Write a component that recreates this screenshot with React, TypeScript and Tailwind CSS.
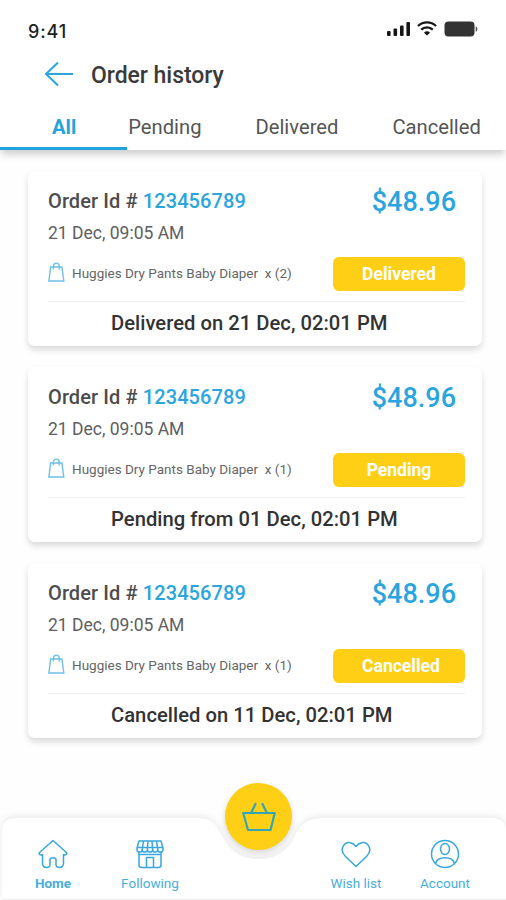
import type { ReactNode } from 'react';

type Order = {
  status: string;
  quantity: number;
  summary: string;
};

const orders: Order[] = [
  { status: 'Delivered', quantity: 2, summary: 'Delivered on 21 Dec, 02:01 PM' },
  { status: 'Pending', quantity: 1, summary: 'Pending from 01 Dec, 02:01 PM' },
  { status: 'Cancelled', quantity: 1, summary: 'Cancelled on 11 Dec, 02:01 PM' },
];

const StatusBar = () => (
  <div className="flex h-[52px] items-start justify-between pl-7 pr-[28px] pt-[21px]">
    <span className="font-['Inter'] text-[18px] font-medium leading-[22px] tracking-[0.9px] text-[#222]">9:41</span>
    <svg width="92" height="16" viewBox="0 0 92 16" fill="none">
      <g fill="#161616">
        <rect x="1" y="10" width="3.6" height="5" rx="1" />
        <rect x="7.5" y="7.5" width="3.6" height="7.5" rx="1" />
        <rect x="14" y="4.5" width="3.6" height="10.5" rx="1" />
        <rect x="20.4" y="1" width="3.6" height="14" rx="1" />
        <path d="M41 14.5l-3-2.8a4.5 4.5 0 0 1 6 0z" />
      </g>
      <path d="M32 5a13 13 0 0 1 18 0M35.2 8.7a8.6 8.6 0 0 1 11.6 0" stroke="#161616" strokeWidth="2.3" />
      <rect x="58.5" y="0.5" width="30" height="15" rx="4" fill="#333" />
      <path d="M89.7 5.2c2.2.8 2.2 4.8 0 5.6z" fill="#555" />
    </svg>
  </div>
);

const Header = () => (
  <header className="h-[150px] bg-white shadow-[0_5px_8px_-1px_rgba(0,0,0,0.2)]">
    <StatusBar />
    <div className="flex h-11 items-center gap-[17px] pl-[44px]">
      <svg width="30" height="26" viewBox="0 0 30 26" fill="none" stroke="#2ba5df" strokeWidth="2">
        <path d="M29 13H2M14 1.5L2 13l12 11.5" />
      </svg>
      <h1 className="pt-[5px] text-[23px] font-medium tracking-[-0.05px] text-[#3a3a3a]">Order history</h1>
    </div>
    <nav className="flex h-[51px] gap-[54px] pl-[52px] pt-[16px] text-[20.2px] leading-[30px] text-[#555]">
      <span className="-mr-[2px] font-bold text-[#25a3dd]">All</span>
      <span>Pending</span>
      <span>Delivered</span>
      <span>Cancelled</span>
    </nav>
    <div className="h-[3px] w-[127px] bg-[#20a3dd]" />
  </header>
);

const OrderCard = ({ status, quantity, summary }: Order) => (
  <article className="h-[175px] rounded-[7px] bg-white pl-5 pr-[17px] pt-[15px] shadow-[0_4px_6px_0_rgba(0,0,0,0.14)]">
    <div className="flex h-8 items-center justify-between pr-[9px]">
      <p className="-mt-[2px] text-[20px] font-medium leading-8 tracking-[0.1px] text-[#4c4c4c]">
        Order Id # <span className="text-[#2ba5df]">123456789</span>
      </p>
      <p className="text-[27px] font-medium leading-8 text-[#2ba5df]">$48.96</p>
    </div>
    <p className="h-[39px] pt-[3px] text-[17.5px] leading-6 text-[#606060]">21 Dec, 09:05 AM</p>
    <div className="flex h-[34px] items-center">
      <svg className="mb-[4px] mr-[7px]" width="17" height="20" viewBox="0 0 17 20" fill="none" stroke="#6dbfe9" strokeWidth="1.4">
        <path d="M2.6 5h11.3l1.9 14H.9zM5.4 7.5V4a2.9 2.9 0 0 1 5.8 0v3.5" />
      </svg>
      <span className="-mt-px whitespace-pre text-[13.5px] text-[#666]">
        {`Huggies Dry Pants Baby Diaper  x (${quantity})`}
      </span>
      <span
        className={`ml-auto h-[34px] w-[132px] rounded-[6px] bg-[#fecf14] text-center text-[17.5px] font-bold leading-[34px] text-white ${
          status === 'Cancelled' ? 'pl-1' : ''
        }`}
      >
        {status}
      </span>
    </div>
    <div className="mt-[10px] border-t border-[#efefef] pl-[63px] pt-[6px] text-[20.2px] font-medium leading-[30px] tracking-[0.03px] text-[#333]">
      {summary}
    </div>
  </article>
);

const NavItem = ({ label, className, children }: { label: string; className: string; children: ReactNode }) => (
  <a className={`flex flex-col items-center ${className}`}>
    <svg width="30" height="30" viewBox="0 0 30 30" fill="none" stroke="#38a7df" strokeWidth="1.5" strokeLinejoin="round">
      {children}
    </svg>
    <span className="mt-[5px] text-[13.5px] leading-[18px] text-[#48ade0]">{label}</span>
  </a>
);

const BottomNav = () => (
  <footer className="relative mt-auto h-[82px]">
    <svg
      className="absolute inset-x-0 bottom-0 drop-shadow-[0_-2px_3px_rgba(0,0,0,0.08)]"
      width="506"
      height="82"
      viewBox="0 0 506 82"
    >
      <path
        d="M2 82V14Q2 0 16 0H197C213 0 217 8 222 18C230 34 242 41 258 41C274 41 288 34 295 18C300 7 307 0 324 0H492Q506 0 506 14V82Z"
        fill="#fff"
      />
      <path d="M2 81.5H506" stroke="#ededed" />
    </svg>
    <div className="absolute left-[225px] top-[-35px] flex size-[67px] items-center justify-center rounded-full bg-[#fecf14] shadow-[0_3px_6px_rgba(0,0,0,0.16)]">
      <svg width="34" height="30" viewBox="0 0 34 30" fill="none" stroke="#32a6b8" strokeWidth="2.2" strokeLinejoin="round" strokeLinecap="round">
        <path d="M1.2 11h31.6L28.5 28H6zM9.3 10.5L13.5 2M24.7 10.5L20.5 2" />
      </svg>
    </div>
    <div className="relative flex pt-[21px]">
      <NavItem label="Home" className="ml-[13px] w-20 font-bold">
        <path d="M15 1.5L1.8 13.2q-1.2 1.3 0 2.3 1 .8 2.7 0V24q0 4.5 4 4.5 3.5 0 3.5-3V21q0-2 1.5-2h3q1.5 0 1.5 2v4.5q0 3 3.5 3 4 0 4-4.5V15.5q1.7.8 2.7 0 1.2-1 0-2.3z" />
      </NavItem>
      <NavItem label="Following" className="ml-[17px] w-20">
        <path d="M4 2h22L28 9v1.5a2.6 2.6 0 0 1-5.2 0 2.6 2.6 0 0 1-5.2 0 2.6 2.6 0 0 1-5.2 0 2.6 2.6 0 0 1-5.2 0 2.6 2.6 0 0 1-5.2 0V9zM2 8.5h26M8.5 2L7.2 10.5M13 2l-.6 8.5M17 2l.6 8.5M21.5 2l1.3 8.5M4 13.5V26q0 2.5 2.5 2.5h17q2.5 0 2.5-2.5V13.5M4 15.5h22M11.5 28V18.5h7V28" />
      </NavItem>
      <NavItem label="Wish list" className="ml-[126px] w-20">
        <path d="M15 27.5L4.5 17.5C-3 10 4 2.3 9.5 3.7Q12.7 4.3 15 7.5Q17.3 4.3 20.5 3.7C26 2.3 33 10 25.5 17.5z" />
      </NavItem>
      <NavItem label="Account" className="ml-[9px] w-20">
        <circle cx="15" cy="15" r="13.5" />
        <ellipse cx="15" cy="10" rx="4.5" ry="5.5" />
        <path d="M5.5 24.5C6.5 20.5 10 18.8 15 18.8S23.5 20.5 24.5 24.5" />
      </NavItem>
    </div>
  </footer>
);

export default function App() {
  return (
    <div className="flex h-[900px] w-[506px] flex-col overflow-hidden bg-[#fefefe] font-['Roboto',sans-serif]">
      <Header />
      <main className="flex flex-col gap-[21px] pl-7 pr-6 pt-[21px]">
        {orders.map((order) => (
          <OrderCard key={order.status} {...order} />
        ))}
      </main>
      <BottomNav />
    </div>
  );
}
